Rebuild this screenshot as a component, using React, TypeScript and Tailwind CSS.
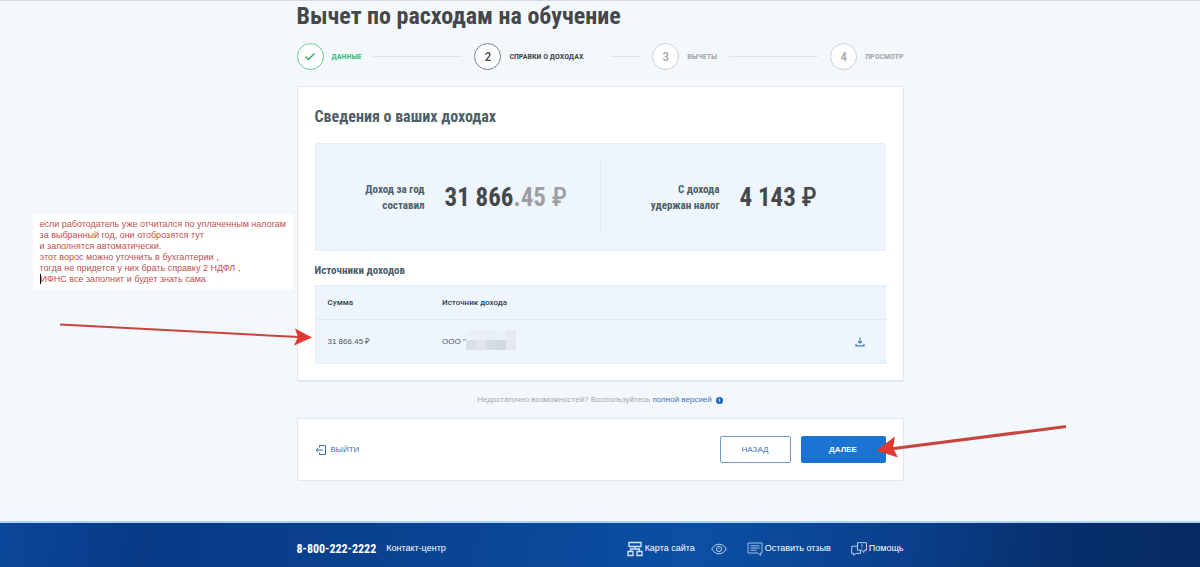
import { Fragment } from "react";
import { Check } from "lucide-react";
import { clsx } from "clsx";

const steps = [
  { n: 1, label: "ДАННЫЕ", state: "done", line: "mx-3" },
  { n: 2, label: "СПРАВКИ О ДОХОДАХ", state: "active", line: "ml-7 mr-3" },
  { n: 3, label: "ВЫЧЕТЫ", state: "next", line: "mx-3" },
  { n: 4, label: "ПРОСМОТР", state: "next", line: "" },
];

const narrow = "font-['Roboto_Condensed','Liberation_Sans_Narrow',sans-serif]";

// hidden company name, two rows of grey cells
const mosaic = [
  ["bg-[#eaf1f7]", "bg-[#e9eff5]", "bg-[#e7eef4]", "bg-[#eaf1f7]", "bg-[#e6ebf1]"],
  ["bg-[#d9dfe6]", "bg-[#dfe5eb]", "bg-[#d6dce3]", "bg-[#d2d8df]", "bg-[#e2e8ee]"],
];

function Steps() {
  return (
    <ol className={clsx("flex items-center", narrow)}>
      {steps.map((s) => (
        <li key={s.n} className={clsx("flex items-center", s.n < 4 && "flex-1")}>
          <span
            className={clsx(
              "grid size-[27px] flex-none place-items-center rounded-full border bg-white text-[13px] font-medium",
              s.state === "done" && "border-[#6cc59b] text-[#35a873]",
              s.state === "active" && "border-[#7d8083] text-[#4a4d50]",
              s.state === "next" && "border-[#cdd1d4] text-[#a5a9ac]",
            )}
          >
            {s.state === "done" ? <Check className="size-3" strokeWidth={3} /> : s.n}
          </span>
          <span
            className={clsx(
              "ml-2 text-[8px] font-bold whitespace-nowrap",
              s.state === "done" && "text-[#3cc07f]",
              s.state === "active" && "text-[#4a4d50]",
              s.state === "next" && "text-[#a5a9ac]",
            )}
          >
            {s.label}
          </span>
          {s.n < 4 && <span className={clsx("h-px flex-1 bg-[#dfe5e9]", s.line)} />}
        </li>
      ))}
    </ol>
  );
}

function Summary() {
  return (
    <div className={clsx("flex rounded-xs border border-[#e4edf3] bg-[#eef5fc] py-4 font-bold", narrow)}>
      <div className="flex flex-1 items-center gap-5 border-r border-[#e2eaf1] pt-[18px] pb-4">
        <p className="w-[109px] text-right text-[11px] leading-4 text-[#4d6069]">
          Доход за год
          <br />
          составил
        </p>
        <p className="text-[25px] leading-10 whitespace-nowrap text-[#45474a]">
          31 866<span className="text-[#9c9fa2]">.45 <span className="font-medium">₽</span></span>
        </p>
      </div>
      <div className="flex flex-1 items-center gap-5 pt-[18px] pb-4">
        <p className="w-[119px] text-right text-[11px] leading-4 text-[#4d6069]">
          С дохода
          <br />
          удержан налог
        </p>
        <p className="text-[25px] leading-10 whitespace-nowrap text-[#45474a]">
          4 143 <span className="font-medium">₽</span>
        </p>
      </div>
    </div>
  );
}

function Sources() {
  return (
    <table className="w-full border border-[#e4edf3] bg-[#eef5fc] text-left text-[8px]">
      <thead>
        <tr className="h-[34px] border-b border-[#e2ebf2] font-[Roboto,sans-serif] text-[#33404a]">
          <th className="w-[127px] pl-3 font-medium">Сумма</th>
          <th className="font-medium">Источник дохода</th>
          <th className="w-10" aria-label="Скачать" />
        </tr>
      </thead>
      <tbody>
        <tr className="h-11 text-[#4d555b]">
          <td className="pl-3">31 866.45 ₽</td>
          <td>
            <div className="flex items-center">
              ООО "
              <span className="mb-1 grid grid-cols-5">
                {mosaic.map((row, i) => (
                  <Fragment key={i}>
                    {row.map((cell, j) => (
                      <span key={j} className={clsx("h-2.5 w-2.5", cell)} />
                    ))}
                  </Fragment>
                ))}
              </span>
            </div>
          </td>
          <td>
            <button className="block p-1" aria-label="Скачать справку">
              <svg viewBox="0 0 10 10" className="ml-1.5 size-[10px]" fill="none" stroke="#3f83c8" strokeWidth="1.2">
                <path d="M5 .5v5.500M3 4.200l2 2 2-2M1 6.800v2h8v-2" />
              </svg>
            </button>
          </td>
        </tr>
      </tbody>
    </table>
  );
}

function Note() {
  return (
    <p className="absolute top-[213px] right-full mr-1 w-[260px] bg-white py-[5px] pl-[7px] text-[9px] leading-[11px] whitespace-nowrap text-[#c0504d]">
      если работодатель уже отчитался по уплаченным налогам
      <br />
      за выбранный год, они отоброзятся тут
      <br />
      и заполнятся автоматически.
      <br />
      этот ворос можно уточнить в бухгалтерии ,
      <br />
      тогда не придется у них брать справку 2 НДФЛ ,
      <br />
      <span className="border-l border-black">ИФНС все заполнит и будет знать сама</span>
    </p>
  );
}

function Footer() {
  return (
    <footer className="border-t-2 border-[#a9d3ee] bg-[linear-gradient(97deg,#0b479a_0%,#083a86_12%,#0a4391_35%,#0b4fa3_58%,#0a3f8a_76%,#072f6c_88%,#062a62_100%)] text-white">
      <div className="mx-auto flex h-[52px] max-w-[607px] items-center text-[9px]">
        <a href="tel:88002222222" className={clsx("text-xs font-bold whitespace-nowrap", narrow)}>8-800-222-2222</a>
        <a href="#contacts" className="ml-2.5">Контакт-центр</a>
        <nav className="ml-auto flex items-center gap-4">
          <a href="#map" className="flex items-center gap-0.5">
            <svg viewBox="0 0 16 16" className="size-4" fill="none" stroke="#d6e6f8" strokeWidth="1.3">
              <path d="M2 1.500h12v4H2zM1 10.500h5v4H1zM10 10.500h5v4h-5zM8 5.500V8M3.500 10.500V8h9v2.500" />
            </svg>
            Карта сайта
          </a>
          <a href="#vision" aria-label="Версия для слабовидящих">
            <svg viewBox="0 0 16 12" className="h-3 w-4" fill="none" stroke="#b7d0ee">
              <path d="M.7 6C2.700 2.800 5.200 1.200 8 1.200S13.300 2.800 15.300 6C13.300 9.200 10.800 10.800 8 10.800S2.700 9.200.7 6z" />
              <circle cx="8" cy="6" r="2.600" />
              <path d="M8 4.800v1.400" />
            </svg>
          </a>
          <a href="#feedback" className="ml-1 flex items-center gap-0.5">
            <svg viewBox="0 0 16 14" className="h-3.5 w-4" fill="none" stroke="#9dbfe6">
              <path d="M1 1h14v10h-1.500v2.500L11 11H1zM3.500 3.800h9M3.500 6h9M3.500 8.200h6" />
            </svg>
            Оставить отзыв
          </a>
          <a href="#help" className="ml-1 flex items-center gap-0.5">
            <svg viewBox="0 0 16 14" className="h-3.5 w-4" fill="none" stroke="#b7d0ee">
              <path d="M6.500.7h9v7.500H13v2.300L10.500 8.200h-4zM6.500 4.200H.7v7.200h2v2l2.300-2h4.500V8.200M11 2.300v2.500M11 5.700v1" />
            </svg>
            Помощь
          </a>
        </nav>
      </div>
    </footer>
  );
}

export default function App() {
  return (
    <div className="flex min-h-screen flex-col overflow-x-hidden border-t border-[#d3dae2] bg-[#f3f8fc] font-['Liberation_Sans',Arial,sans-serif]">
      <main className="relative mx-auto w-full max-w-[607px] flex-1 pb-10">
        <h1 className={clsx("mb-3 text-2xl leading-[30px] font-bold whitespace-nowrap text-[#45474a]", narrow)}>
          Вычет по расходам на обучение
        </h1>
        <Steps />

        <section className="mt-4 rounded-xs border border-b-2 border-[#dfe8ee] bg-white px-[17px] py-4">
          <h2 className={clsx("mb-3 text-base leading-7 font-bold text-[#4d6069]", narrow)}>Сведения о ваших доходах</h2>
          <Summary />
          <h3 className={clsx("mt-3 mb-1.5 text-[11px] leading-4 font-bold text-[#4d6069]", narrow)}>Источники доходов</h3>
          <Sources />
        </section>

        <p className="flex h-9 items-center justify-center text-[8px] text-[#a3a8ac]">
          Недостаточно возможностей? Воспользуйтесь&nbsp;
          <a href="#full" className="text-[#3f74c0]">полной версией</a>
          <span className="ml-1 grid size-[7px] place-items-center rounded-full bg-[#1a66bd] text-[6px] leading-none font-bold text-white">i</span>
        </p>

        <section className="flex items-center rounded-xs border border-[#dfe8ee] bg-white px-[17px] py-[17px]">
          <a href="#exit" className="flex items-center gap-1 text-[8px] text-[#3a6fb3]">
            <svg viewBox="0 0 12 12" className="size-3" fill="none" stroke="currentColor">
              <path d="M4.500 3.500v-2h6v9h-6v-2M8 6H1.200M3.200 4 1.200 6l2 2" />
            </svg>
            ВЫЙТИ
          </a>
          <button className="ml-auto h-[27px] w-[71px] rounded-xs border border-[#6f9cc9] text-[8px] text-[#3a6fb3]">НАЗАД</button>
          <button className="ml-2.5 h-[27px] w-[85px] rounded-xs bg-[#1b74d2] text-[8px] font-bold text-white">ДАЛЕЕ</button>
        </section>

        <Note />
        {/* red pointer arrows */}
        <svg className="absolute top-[310px] right-full -mr-4 h-10 w-[254px]" viewBox="0 0 254 40">
          <path d="M1 13.500 240 26" stroke="#c9443c" strokeWidth="2" />
          <path d="M253 26.500 235 34.500l4-8.500-3-8.500z" fill="#e03a30" />
        </svg>
        <svg className="absolute top-[420px] left-full -ml-7 h-10 w-[192px]" viewBox="0 0 192 40">
          <path d="M190 5.500 14 28" stroke="#c9443c" strokeWidth="3" />
          <path d="M0 29.500 19 15.500l-2 11.500 5 9.500z" fill="#e03a30" />
        </svg>
      </main>
      <Footer />
    </div>
  );
}
